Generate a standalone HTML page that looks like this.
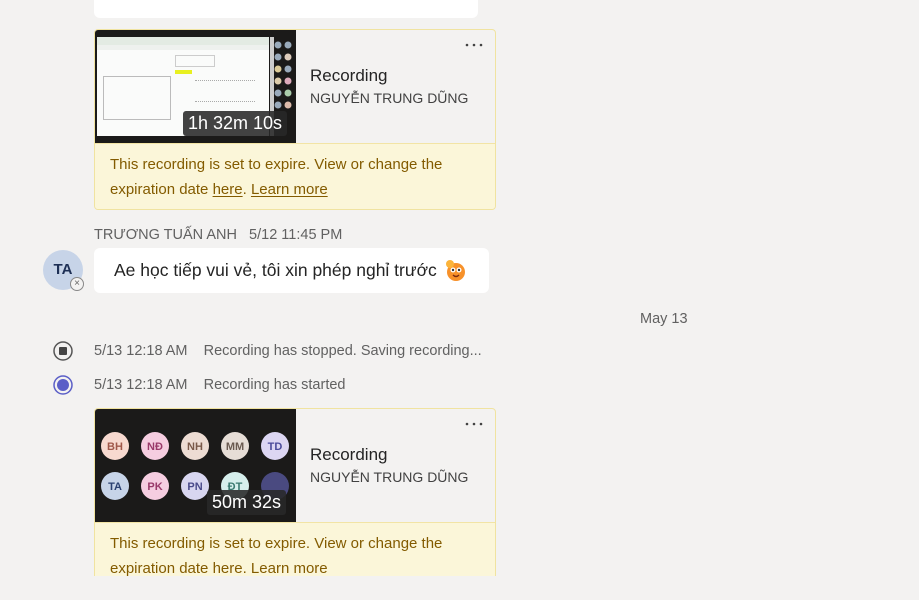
<!DOCTYPE html>
<html><head><meta charset="utf-8"><style>
*{margin:0;padding:0;box-sizing:border-box}
body{width:919px;height:600px;background:#f3f2f1;position:relative;overflow:hidden;font-family:"Liberation Sans","Noto Sans CJK SC",sans-serif;color:#242424}
.abs{position:absolute}
.card{position:absolute;left:94px;width:402px;border:1px solid #e1dfdd;border-radius:4px;background:#f3f2f1;overflow:hidden}
.thumb{position:absolute;left:0;top:0;width:201px;height:113px;background:#1b1a19;overflow:hidden}
.dur{position:absolute;background:rgba(40,40,40,.88);color:#fff;font-size:18px;padding:0 5px;height:25px;line-height:25px;border-radius:3px;white-space:nowrap}
.title{position:absolute;left:215px;font-size:17px;color:#242424}
.name{position:absolute;left:215px;font-size:14px;color:#424242;white-space:nowrap}
.dots{position:absolute;right:12px;top:13px}
.ban{position:absolute;left:0;right:0;background:#fbf6d9;border-top:1px solid #f2e4a5;color:#835b00;font-size:15px;padding:8px 15px;line-height:25px}
.ban u{text-underline-offset:2px}
.meta{font-size:14.5px;color:#616161;white-space:nowrap}
</style></head><body>
<div class="abs" style="left:94px;top:-10px;width:384px;height:28px;background:#fff;border-radius:6px"></div>

<div class="card" style="top:29px;height:181px;border-color:#f0e3a0">
  <div class="thumb">
    <div class="abs" style="left:2px;top:7px;width:172px;height:99px;background:#fafbfa"></div>
    <div class="abs" style="left:2px;top:7px;width:172px;height:8px;background:#e3ebe3"></div>
    <div class="abs" style="left:2px;top:15px;width:172px;height:5px;background:#eef1ee"></div>
    <div class="abs" style="left:8px;top:46px;width:68px;height:44px;border:1px solid #bbb"></div>
    <div class="abs" style="left:80px;top:40px;width:17px;height:4px;background:#e8f020"></div>
    <div class="abs" style="left:80px;top:25px;width:40px;height:12px;border:1px solid #ccc"></div>
    <div class="abs" style="left:100px;top:50px;width:60px;height:22px;border-top:1px dotted #aaa;border-bottom:1px dotted #aaa"></div>
    <div class="abs" style="left:175px;top:7px;width:4px;height:99px;background:#ccc"></div>
    <svg class="abs" style="left:178px;top:8px" width="22" height="100"><g fill="#9ab"><circle cx="5" cy="7" r="3.5"/><circle cx="15" cy="7" r="3.5"/><circle cx="5" cy="19" r="3.5"/><circle cx="15" cy="19" r="3.5" fill="#dcb"/><circle cx="5" cy="31" r="3.5" fill="#dc9"/><circle cx="15" cy="31" r="3.5"/><circle cx="5" cy="43" r="3.5" fill="#dca"/><circle cx="15" cy="43" r="3.5" fill="#dab"/><circle cx="5" cy="55" r="3.5"/><circle cx="15" cy="55" r="3.5" fill="#aca"/><circle cx="5" cy="67" r="3.5"/><circle cx="15" cy="67" r="3.5" fill="#dba"/></g></svg>
    <div class="dur" style="left:88px;top:81px">1h 32m 10s</div>
  </div>
  <svg class="dots" width="18" height="4"><circle cx="2" cy="2" r="1.3" fill="#424242"/><circle cx="9" cy="2" r="1.3" fill="#424242"/><circle cx="16" cy="2" r="1.3" fill="#424242"/></svg>
  <div class="title" style="top:36px">Recording</div>
  <div class="name" style="top:60px">NGUYỄN TRUNG DŨNG</div>
  <div class="ban" style="top:113px;height:68px">This recording is set to expire. View or change the expiration date <u>here</u>. <u>Learn more</u></div>
</div>

<div class="abs meta" style="left:94px;top:227px">TRƯƠNG TUẤN ANH&nbsp;&nbsp;&nbsp;5/12 11:45 PM</div>
<div class="abs" style="left:43px;top:250px;width:40px;height:40px;border-radius:50%;background:#c7d4e8;color:#1d2f55;font-size:15px;font-weight:bold;text-align:center;line-height:40px">TA</div>
<div class="abs" style="left:70px;top:277px;width:14px;height:14px;border-radius:50%;background:#f3f2f1;border:1px solid #888;color:#666;font-size:10px;line-height:12px;text-align:center">×</div>
<div class="abs" style="left:94px;top:248px;width:395px;height:45px;background:#fff;border-radius:6px;font-size:17.5px;line-height:45px;padding-left:20px;white-space:nowrap">Ae học tiếp vui vẻ, tôi xin phép nghỉ trước
<svg style="position:absolute;left:349px;top:10px" width="24" height="24"><circle cx="13" cy="14" r="9" fill="#f7912a"/><circle cx="7" cy="6" r="4" fill="#fbb33a"/><circle cx="10" cy="12" r="2.5" fill="#fff"/><circle cx="16" cy="12" r="2.5" fill="#fff"/><circle cx="10" cy="12" r="1.2" fill="#333"/><circle cx="16" cy="12" r="1.2" fill="#333"/><path d="M10 17 Q13 20 16 17" stroke="#7a2a10" stroke-width="1.4" fill="none"/></svg></div>

<div class="abs meta" style="left:640px;top:311px">May 13</div>

<svg class="abs" style="left:53px;top:341px" width="20" height="20"><circle cx="10" cy="10" r="9" fill="none" stroke="#555" stroke-width="1.5"/><rect x="6" y="6" width="8" height="8" rx="1" fill="#444"/></svg>
<div class="abs meta" style="left:94px;top:343px">5/13 12:18 AM&nbsp;&nbsp;&nbsp;&nbsp;Recording has stopped. Saving recording...</div>
<svg class="abs" style="left:53px;top:375px" width="20" height="20"><circle cx="10" cy="10" r="9" fill="none" stroke="#5b5fc7" stroke-width="1.5"/><circle cx="10" cy="10" r="6" fill="#5b5fc7"/></svg>
<div class="abs meta" style="left:94px;top:377px">5/13 12:18 AM&nbsp;&nbsp;&nbsp;&nbsp;Recording has started</div>

<div class="card" style="top:408px;height:180px;border-color:#f0e3a0">
  <div class="thumb">
    <svg class="abs" style="left:0;top:0" width="201" height="113" font-family="Liberation Sans" font-size="11" font-weight="bold" text-anchor="middle">
      <g><circle cx="20" cy="37" r="14" fill="#f7d9cf"/><text x="20" y="41" fill="#a0584a">BH</text>
      <circle cx="60" cy="37" r="14" fill="#f5cde0"/><text x="60" y="41" fill="#9a3a6a">NĐ</text>
      <circle cx="100" cy="37" r="14" fill="#eddcd3"/><text x="100" y="41" fill="#7a5a4a">NH</text>
      <circle cx="140" cy="37" r="14" fill="#e6ddd6"/><text x="140" y="41" fill="#6a5a50">MM</text>
      <circle cx="180" cy="37" r="14" fill="#dcd6f2"/><text x="180" y="41" fill="#4a4a9a">TD</text>
      <circle cx="20" cy="77" r="14" fill="#c7d4e8"/><text x="20" y="81" fill="#2a4070">TA</text>
      <circle cx="60" cy="77" r="14" fill="#f5cde0"/><text x="60" y="81" fill="#9a3a6a">PK</text>
      <circle cx="100" cy="77" r="14" fill="#d8d6f0"/><text x="100" y="81" fill="#4a4a8a">PN</text>
      <circle cx="140" cy="77" r="14" fill="#d6efec"/><text x="140" y="81" fill="#3a7a70">ĐT</text>
      <circle cx="180" cy="77" r="14" fill="#4a4a80"/></g>
    </svg>
    <div class="dur" style="left:112px;top:81px">50m 32s</div>
  </div>
  <svg class="dots" width="18" height="4"><circle cx="2" cy="2" r="1.3" fill="#424242"/><circle cx="9" cy="2" r="1.3" fill="#424242"/><circle cx="16" cy="2" r="1.3" fill="#424242"/></svg>
  <div class="title" style="top:36px">Recording</div>
  <div class="name" style="top:60px">NGUYỄN TRUNG DŨNG</div>
  <div class="ban" style="top:113px;height:70px">This recording is set to expire. View or change the expiration date here. Learn more</div>
</div>
<div class="abs" style="left:0;top:576px;width:919px;height:24px;background:#f3f2f1"></div>
</body></html>
